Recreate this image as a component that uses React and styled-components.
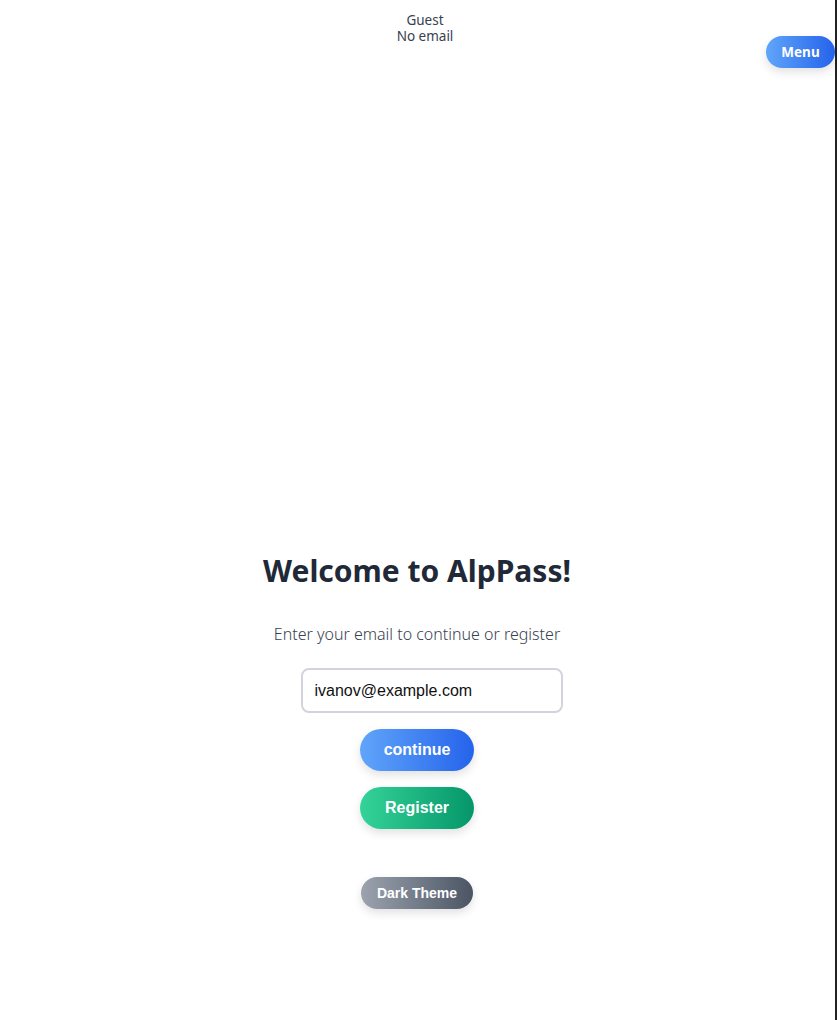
import React, { useState } from 'react';
import styled, { createGlobalStyle } from 'styled-components';

const GlobalStyle = createGlobalStyle`
  html, body {
    margin: 0;
    padding: 0;
    background: #ffffff;
  }
  body {
    font-family: "Noto Sans", "Open Sans", sans-serif;
  }
`;

const Page = styled.div`
  box-sizing: border-box;
  min-height: 1020px;
  border-right: 2px solid #222222;
  display: flex;
  flex-direction: column;
`;

const Header = styled.header`
  display: grid;
  grid-template-columns: 1fr auto;
  align-items: start;
  padding-top: 12px;
`;

const UserInfo = styled.div`
  padding-left: 84px;
  text-align: center;
  font-size: 13.5px;
  line-height: 16px;
  color: #374151;
`;

const GradientButton = styled.button`
  border: none;
  cursor: pointer;
  color: #ffffff;
  font-weight: 700;
  font-family: ${(p) => p.$font || '"Liberation Sans", Arial, sans-serif'};
  background: linear-gradient(90deg, ${(p) => p.$from}, ${(p) => p.$to});
  box-shadow: 0 4px 10px rgba(0, 0, 0, 0.12);
`;

const MenuButton = styled(GradientButton)`
  margin-top: 24px;
  width: 69px;
  height: 32px;
  border-radius: 16px;
  font-size: 13.5px;
`;

const Main = styled.main`
  display: flex;
  flex-direction: column;
  align-items: center;
  padding-top: 483px;
  padding-right: 1px;
`;

const Title = styled.h1`
  margin: 0;
  font-size: 30px;
  line-height: 40px;
  font-weight: 700;
  color: #1f2937;
`;

const Subtitle = styled.p`
  margin: 32px 0 0;
  font-size: 16px;
  line-height: 22px;
  font-weight: 300;
  color: #374151;
`;

const EmailInput = styled.input`
  box-sizing: border-box;
  margin: 23px 0 0 29px;
  width: 262px;
  height: 45px;
  padding: 0 12px;
  border: 2px solid #d1d5db;
  border-radius: 8px;
  font-family: "Liberation Sans", Arial, sans-serif;
  font-size: 16px;
  color: #111111;
  outline: none;
`;

const ActionButton = styled(GradientButton)`
  margin-top: ${(p) => p.$gap}px;
  width: 114px;
  height: 42px;
  border-radius: 21px;
  font-size: 16px;
`;

const ThemeButton = styled(GradientButton)`
  margin-top: 48px;
  width: 112px;
  height: 32px;
  border-radius: 16px;
  font-size: 14px;
`;

const App = () => {
  const [email, setEmail] = useState('ivanov@example.com');

  return (
    <>
      <GlobalStyle />
      <Page>
        <Header>
          <UserInfo>
            <div>Guest</div>
            <div>No email</div>
          </UserInfo>
          <MenuButton
            $from="#60a5fa"
            $to="#2563eb"
            $font='"Noto Sans", "Open Sans", sans-serif'
          >
            Menu
          </MenuButton>
        </Header>
        <Main>
          <Title>Welcome to AlpPass!</Title>
          <Subtitle>Enter your email to continue or register</Subtitle>
          <EmailInput
            type="email"
            value={email}
            onChange={(e) => setEmail(e.target.value)}
          />
          <ActionButton $gap={16} $from="#60a5fa" $to="#2563eb">
            continue
          </ActionButton>
          <ActionButton $gap={16} $from="#34d399" $to="#059669">
            Register
          </ActionButton>
          <ThemeButton $from="#9ca3af" $to="#4b5563">
            Dark Theme
          </ThemeButton>
        </Main>
      </Page>
    </>
  );
};

export default App;
